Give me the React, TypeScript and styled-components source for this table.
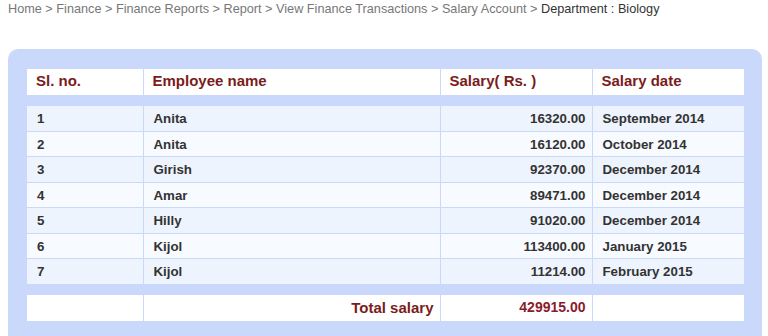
import styled, { createGlobalStyle } from "styled-components";

const rows = [
  { no: 1, name: "Anita", salary: "16320.00", date: "September 2014" },
  { no: 2, name: "Anita", salary: "16120.00", date: "October 2014" },
  { no: 3, name: "Girish", salary: "92370.00", date: "December 2014" },
  { no: 4, name: "Amar", salary: "89471.00", date: "December 2014" },
  { no: 5, name: "Hilly", salary: "91020.00", date: "December 2014" },
  { no: 6, name: "Kijol", salary: "113400.00", date: "January 2015" },
  { no: 7, name: "Kijol", salary: "11214.00", date: "February 2015" },
];

const crumbs = [
  "Home",
  "Finance",
  "Finance Reports",
  "Report",
  "View Finance Transactions",
  "Salary Account",
];

function Cols() {
  return (
    <colgroup>
      <col width={116} />
      <col width={297} />
      <col width={152} />
      <col width={152} />
    </colgroup>
  );
}

function App() {
  return (
    <>
      <GlobalStyle />
      <Page>
        <Breadcrumb>
          {crumbs.map((c) => (
            <Crumb key={c}>{c} &gt; </Crumb>
          ))}
          <Current>Department : Biology</Current>
        </Breadcrumb>

        <Panel>
          <Table>
            <Cols />
            <thead>
              <tr>
                <Th>Sl. no.</Th>
                <Th>Employee name</Th>
                <Th>Salary( Rs. )</Th>
                <Th>Salary date</Th>
              </tr>
            </thead>
          </Table>

          <Table>
            <Cols />
            <tbody>
              {rows.map((r) => (
                <Row key={r.no} $odd={r.no % 2 === 1}>
                  <Td>{r.no}</Td>
                  <Td>{r.name}</Td>
                  <Td $right>{r.salary}</Td>
                  <Td>{r.date}</Td>
                </Row>
              ))}
            </tbody>
          </Table>

          <Table>
            <Cols />
            <tbody>
              <tr>
                <TotalCell />
                <TotalCell $right>Total salary</TotalCell>
                <TotalCell $right $amount>
                  429915.00
                </TotalCell>
                <TotalCell />
              </tr>
            </tbody>
          </Table>
        </Panel>
      </Page>
    </>
  );
}

export default App;

const GlobalStyle = createGlobalStyle`
  body {
    margin: 0;
    background: #fff;
    font-family: "Liberation Sans", Arial, sans-serif;
  }
`;

const Page = styled.div`
  padding: 0 6px 0 8px;
`;

const Breadcrumb = styled.div`
  font-size: 12.7px;
  line-height: 18px;
  color: #777;
  height: 49px;
`;

const Crumb = styled.span`
  white-space: pre;
`;

const Current = styled.span`
  color: #333;
`;

const Panel = styled.div`
  background: #cad9fb;
  border-radius: 10px;
  padding: 20px 19px;
  display: flex;
  flex-direction: column;
  gap: 11px;
  height: 300px;
  box-sizing: border-box;
`;

const Table = styled.table`
  width: 717px;
  border-collapse: collapse;
  table-layout: fixed;
`;

const Th = styled.th`
  background: #fff;
  height: 23px;
  padding: 0 9px 3px;
  line-height: 17px;
  text-align: left;
  font-size: 15px;
  font-weight: bold;
  color: #7a1c1c;
  border-left: 1px solid #cad9fb;
  &:first-child {
    border-left: none;
  }
`;

const Row = styled.tr<{ $odd: boolean }>`
  background: ${(p) => (p.$odd ? "#eef4fe" : "#f7faff")};
  border-top: 1px solid #cad9fb;
  &:first-child {
    border-top: none;
  }
`;

const Td = styled.td<{ $right?: boolean }>`
  height: 22.5px;
  padding: 2px 6px 0 10px;
  line-height: 16px;
  font-size: 13.3px;
  font-weight: bold;
  color: #333;
  text-align: ${(p) => (p.$right ? "right" : "left")};
  border-left: 1px solid #cad9fb;
  &:first-child {
    border-left: none;
  }
`;

const TotalCell = styled.td<{ $right?: boolean; $amount?: boolean }>`
  background: #fff;
  height: 25px;
  padding: 0 6px 1px 10px;
  line-height: 17px;
  font-size: ${(p) => (p.$amount ? "14px" : "15px")};
  font-weight: bold;
  color: ${(p) => (p.$amount ? "#8b1b2b" : "#7a1c1c")};
  text-align: ${(p) => (p.$right ? "right" : "left")};
  border-left: 1px solid #cad9fb;
  &:first-child {
    border-left: none;
  }
`;
